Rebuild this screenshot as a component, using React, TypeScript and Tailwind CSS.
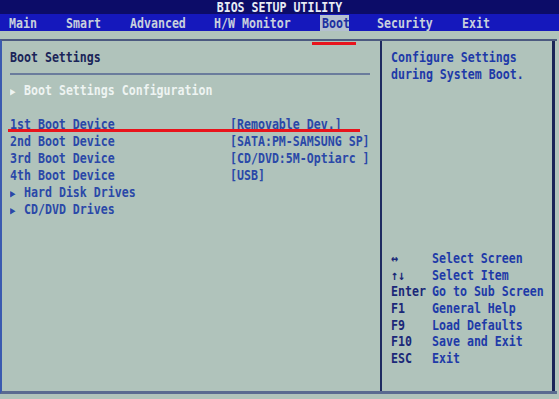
const MENU = [
  { label: "Main", w: "w-[57px]" },
  { label: "Smart", w: "w-[64px]" },
  { label: "Advanced", w: "w-[84px]" },
  { label: "H/W Monitor", w: "w-[106px]" },
];

const BOOT_ROWS = [
  { label: "1st Boot Device", value: "[Removable Dev.]" },
  { label: "2nd Boot Device", value: "[SATA:PM-SAMSUNG SP]" },
  { label: "3rd Boot Device", value: "[CD/DVD:5M-Optiarc ]" },
  { label: "4th Boot Device", value: "[USB]" },
];

const HELP = [
  { key: "↔", text: "Select Screen" },
  { key: "↑↓", text: "Select Item" },
  { key: "Enter", text: "Go to Sub Screen" },
  { key: "F1", text: "General Help" },
  { key: "F9", text: "Load Defaults" },
  { key: "F10", text: "Save and Exit" },
  { key: "ESC", text: "Exit" },
];

function Line({ children, className = "" }: { children?: React.ReactNode; className?: string }) {
  return (
    <div className={`h-[17px] leading-[17px] whitespace-pre scale-y-[1.18] ${className}`}>
      {children}
    </div>
  );
}

function Arrow() {
  return <span className="inline-block w-[14px] text-[9px]">▶</span>;
}

export default function App() {
  return (
    <div className="relative h-[399px] w-[559px] overflow-hidden bg-[#b0c3bb] font-['DejaVu_Sans_Mono',monospace] text-[11.6px] font-bold">
      {/* title */}
      <div className="flex h-[14px] items-center justify-center bg-[#0c0c68] text-[#e8ecf4]">
        <span className="inline-block scale-y-[1.18] leading-[14px]">BIOS SETUP UTILITY</span>
      </div>

      {/* menu bar */}
      <div className="flex h-[17px] bg-[#1518bc] pl-[9px] text-[#c8d0dc]">
        {MENU.map((m) => (
          <div key={m.label} className={`${m.w} pt-[2px] leading-[15px]`}>
            <span className="inline-block scale-y-[1.18]">{m.label}</span>
          </div>
        ))}
        <div className="mt-[1px] w-[29px] bg-[#b4c0d0] pl-[2px] pt-[1px] leading-[15px] text-[#2030a0]">
          <span className="inline-block scale-y-[1.18]">Boot</span>
        </div>
        <div className="ml-[28px] w-[85px] pt-[2px] leading-[15px]">
          <span className="inline-block scale-y-[1.18]">Security</span>
        </div>
        <div className="pt-[2px] leading-[15px]">
          <span className="inline-block scale-y-[1.18]">Exit</span>
        </div>
      </div>

      {/* panels */}
      <div className="mt-[8px] flex h-[355px] w-[557px] border-b-[3px] border-l-2 border-t-2 border-b-[#5a6a90] border-l-[#3a5ab0] border-t-[#4c5a80]">
        <div className="w-[380px] border-r-2 border-r-[#1e2a60] pl-[8px] pt-[8px]">
          <Line className="text-[#1a2458]">Boot Settings</Line>
          <div className="mr-[10px] mt-[7px] h-[2px] bg-[#6a7c9c]" />
          <Line className="mt-[7px] text-[#eef4f2]">
            <Arrow />Boot Settings Configuration
          </Line>
          <Line />
          <div className="text-[#2a48a8]">
            {BOOT_ROWS.map((r) => (
              <Line key={r.label} className="flex">
                <span className="w-[220px]">{r.label}</span>
                <span>{r.value}</span>
              </Line>
            ))}
            <Line>
              <Arrow />Hard Disk Drives
            </Line>
            <Line>
              <Arrow />CD/DVD Drives
            </Line>
          </div>
        </div>

        <div className="flex w-[173px] flex-col border-r-[3px] border-r-[#1a2458] pl-[9px] pt-[8px] text-[#1e3aa8]">
          <Line>Configure Settings</Line>
          <Line>during System Boot.</Line>
          <div className="mt-[167px]">
            {HELP.map((h) => (
              <div key={h.text} className="grid h-[16.7px] grid-cols-[41px_1fr] whitespace-pre leading-[16.7px] scale-y-[1.18]">
                <span className="text-[#1a2878]">{h.key}</span>
                <span>{h.text}</span>
              </div>
            ))}
          </div>
        </div>
      </div>

      {/* red annotation marks */}
      <div className="absolute left-[312px] top-[42px] h-[3px] w-[44px] bg-[#e8141c]" />
      <div className="absolute left-[8px] top-[129px] h-[3px] w-[352px] bg-[#e8141c]" />
    </div>
  );
}
